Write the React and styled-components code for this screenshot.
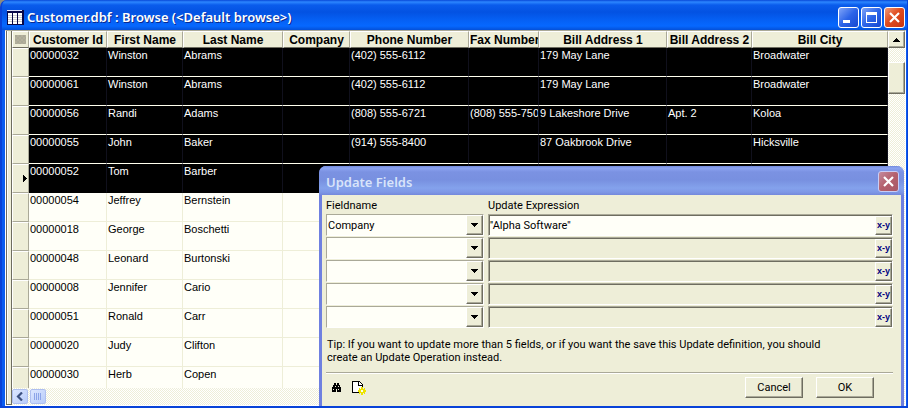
import React from "react";
import styled, { createGlobalStyle, css } from "styled-components";

const face = "#eeeed8";
const paper = "#fffff8";
const shade = "#aaa998";
const dark = "#6e6d60";
const ui = '"Liberation Sans", Arial, sans-serif';
const form = 'Roboto, "Liberation Sans", sans-serif';
const caption = '"Trebuchet MS", "Noto Sans", sans-serif';

const Global = createGlobalStyle`
  * { box-sizing: border-box; }
  body { margin: 0; background: #8c8b80; font-family: ${ui}; color: #000; }
  button, select, input { font-family: inherit; color: inherit; margin: 0; padding: 0; border: 0; border-radius: 0; }
`;

const hatch = css`
  background: repeating-conic-gradient(#ffffff 0 25%, ${face} 0 50%) 0 0 / 2px 2px;
`;

const raised = css`
  background: ${face};
  border: 1px solid;
  border-color: #ffffff ${dark} ${dark} #ffffff;
  box-shadow: inset -1px -1px 0 ${shade};
`;

const Window = styled.main`
  position: relative;
  display: flex;
  flex-direction: column;
  height: 100vh;
  overflow: hidden;
  border: solid #0842d8;
  border-width: 0 1px 2px 2px;
  border-radius: 7px 0 0 0;
  background: #0a5cf0;
`;

const TitleBar = styled.header`
  flex: none;
  display: flex;
  align-items: center;
  height: 30px;
  padding: 4px 2px 0 5px;
  background: linear-gradient(#0848d8 0, #2c86ff 2px, #0a5cec 5px, #0352e2 12px, #0560f4 20px, #0668ff 26px, #0450d8 30px);
`;

const Title = styled.h1`
  flex: 1;
  margin: 0 0 0 3px;
  color: #fff;
  font: 600 13px/20px ${caption};
  text-shadow: 1px 1px 0 #0a2a90;
  white-space: nowrap;
`;

const CaptionButtons = styled.div`
  display: flex;
  gap: 2px;
`;

const CaptionButton = styled.button`
  display: grid;
  place-items: center;
  width: 21px;
  height: 21px;
  && { border: 1px solid ${(p) => (p.$tone === "muted" ? "#c8cdf6" : "#ffffff")}; border-radius: 3px; }
  background: ${(p) => (p.$tone === "close"
    ? "linear-gradient(135deg, #f09a78, #e04c20 45%, #c83410)"
    : p.$tone === "muted"
      ? "linear-gradient(135deg, #c48a9c, #b4606c 50%, #a85868)"
      : "linear-gradient(135deg, #80a4f8, #2c64e8 50%, #1648d0)")};
`;

const Client = styled.div`
  flex: 1;
  min-height: 0;
  display: flex;
  margin: 0 1px 0 3px;
  border: solid #ffffff;
  border-width: 0 1px 1px 1px;
  border-top: 1px solid ${shade};
  background: ${face};
`;

const Gutter = styled.div`
  flex: none;
  width: 6px;
  border-left: 1px solid ${dark};
  border-right: 1px solid ${dark};
  border-bottom: 1px solid ${dark};
  background: ${face};
  box-shadow: inset 1px 0 0 #ffffff;
`;

const Sheet = styled.div`
  flex: 1;
  min-width: 0;
  display: flex;
  flex-direction: column;
`;

const Viewport = styled.div`
  flex: 1;
  min-height: 0;
  overflow: hidden;
  background: ${paper};
`;

const Grid = styled.table`
  width: 100%;
  table-layout: fixed;
  border-collapse: separate;
  border-spacing: 0;
  font-size: 11px;
  line-height: 13px;
`;

const Col = styled.col`
  width: ${(p) => (p.$w ? `${p.$w}px` : "auto")};
`;

const Head = styled.th`
  height: 17px;
  padding: 0;
  overflow: hidden;
  white-space: nowrap;
  font: bold 12px/14px ${ui};
  background: ${face};
  border: 1px solid;
  border-color: #ffffff ${shade} ${dark} #ffffff;
`;

const Corner = styled(Head)`
  padding: 0 2px;
`;

const Stipple = styled.div`
  height: 9px;
  background: repeating-conic-gradient(#b4b09c 0 25%, #aaa998 0 50%) 0 0 / 4px 4px;
`;

const Row = styled.tr`
  background: ${(p) => (p.$selected ? "#000000" : paper)};
  color: ${(p) => (p.$selected ? "#ffffff" : "#000000")};
  --line: ${(p) => (p.$selected ? "#10101c" : face)};
  --rule: ${(p) => (p.$last ? "#000000" : p.$selected ? "#ffffee" : face)};
`;

const Cell = styled.td`
  height: 29px;
  padding: 1px 0 0 1px;
  vertical-align: top;
  overflow: hidden;
  white-space: nowrap;
  border-right: 1px solid var(--line);
  border-bottom: 1px solid var(--rule);
`;

const Selector = styled.th`
  height: 29px;
  padding: 0 1px 0 0;
  background: ${face};
  color: #000;
  border: 1px solid;
  border-color: #ffffff ${shade} ${shade} #ffffff;
  text-align: right;
  vertical-align: middle;
  line-height: 0;
`;

const VScroll = styled.div`
  flex: none;
  display: flex;
  flex-direction: column;
  width: 17px;
  ${hatch}
`;

const ScrollArrow = styled.button`
  && { ${raised} }
  display: grid;
  place-items: center;
  height: 17px;
`;

const VThumb = styled.div`
  ${raised}
  height: 32px;
  margin-top: 14px;
`;

const HScroll = styled.div`
  flex: none;
  display: flex;
  gap: 2px;
  height: 17px;
  padding: 1px 0;
  ${hatch}
`;

const BlueButton = styled.button`
  display: grid;
  place-items: center;
  width: 16px;
  height: 15px;
  && { border: 1px solid #aebff0; border-radius: 2px; }
  background: linear-gradient(135deg, #dce6ff, #b8ccfa);
`;

const Dialog = styled.section`
  position: absolute;
  left: 317px;
  right: 3px;
  top: 166px;
  border: solid #6f80e0;
  border-width: 0 3px;
  border-radius: 7px 7px 0 0;
  background: ${face};
  font-family: ${form};
`;

const DialogBar = styled.header`
  display: flex;
  align-items: center;
  height: 29px;
  margin: 0 -3px;
  padding: 2px 5px 0 7px;
  border-radius: 7px 7px 0 0;
  background: linear-gradient(#7088dc 0, #8ca4f0 2px, #7b92e2 6px, #7890e0 14px, #84a2ec 22px, #7e98e6 26px, #7488dc 29px);
`;

const DialogTitle = styled.h2`
  flex: 1;
  margin: 0;
  color: #d8e4fa;
  font: 600 13px/20px ${caption};
`;

const Form = styled.form`
  padding: 4px 8px 8px 4px;
  font-size: 11px;
`;

const FieldGrid = styled.div`
  display: grid;
  grid-template-columns: 158px 1fr;
  column-gap: 4px;
  row-gap: 1px;
`;

const Label = styled.label`
  height: 14px;
  font-size: 11px;
  line-height: 14px;
`;

const Combo = styled.div`
  display: grid;
  height: 22px;
  background: ${paper};
  border: 1px solid;
  border-color: ${shade} #ffffff #ffffff ${shade};
`;

const Select = styled.select`
  grid-area: 1 / 1;
  appearance: none;
  width: 100%;
  && { padding-left: 1px; }
  background: transparent;
  font-size: 11px;
`;

const ComboArrow = styled.span`
  grid-area: 1 / 1;
  justify-self: end;
  display: grid;
  place-items: center;
  width: 17px;
  pointer-events: none;
  ${raised}
`;

const Expression = styled.div`
  display: flex;
  height: 22px;
  border: 1px solid;
  border-color: ${shade} #ffffff #ffffff ${shade};
  box-shadow: inset 1px 1px 0 ${dark};
  padding: 1px 0 0 1px;
`;

const ExpressionInput = styled.input`
  flex: 1;
  min-width: 0;
  font-size: 11px;
  background: ${(p) => (p.disabled ? "transparent" : paper)};
`;

const XyButton = styled.button`
  && { ${raised} color: #000080; padding-bottom: 2px; font: bold 9px/12px ${ui}; }
  flex: none;
  display: grid;
  place-items: center;
  width: 17px;
`;

const Tip = styled.p`
  margin: 10px 80px 8px 1px;
  font-size: 11px;
  line-height: 13px;
  white-space: nowrap;
`;

const Rule = styled.hr`
  margin: 0;
  border: 0;
  border-top: 1px solid ${shade};
  border-bottom: 1px solid #ffffff;
`;

const Footer = styled.div`
  display: flex;
  align-items: center;
  padding: 3px 19px 0 3px;
`;

const Tools = styled.div`
  flex: 1;
  display: flex;
  gap: 6px;
`;

const ToolButton = styled.button`
  display: grid;
  place-items: center;
  width: 16px;
  height: 16px;
  background: transparent;
`;

const Actions = styled.div`
  display: flex;
  gap: 13px;
`;

const PushButton = styled.button`
  && { ${raised} }
  width: 58px;
  height: 21px;
  font-size: 11px;
`;

const Cross = ({ size = 13 }) => (
  <svg width={size} height={size} viewBox="0 0 13 13" aria-hidden="true">
    <path d="M2 2 11 11M11 2 2 11" stroke="#fff" strokeWidth="2.2" />
  </svg>
);

const DownArrow = () => (
  <svg width="7" height="4" viewBox="0 0 7 4" shapeRendering="crispEdges" aria-hidden="true">
    <path d="M0 0h7v1H6v1H5v1H4v1H3V3H2V2H1V1H0z" />
  </svg>
);

const UpArrow = () => (
  <svg width="7" height="4" viewBox="0 0 7 4" shapeRendering="crispEdges" aria-hidden="true">
    <path d="M3 0h1v1h1v1h1v1h1v1H0V3h1V2h1V1h1z" />
  </svg>
);

const TableIcon = () => (
  <svg width="17" height="15" viewBox="0 0 17 15" shapeRendering="crispEdges" aria-hidden="true">
    <path fill="#080848" d="M0 0h17v15H0z" />
    <path fill="#fff" d="M1 3h4v11H1zM6 3h4v11H6zM11 3h4v11h-4z" />
    <path stroke="#d0d0d0" d="M1 5.5h14M1 7.5h14M1 9.5h14M1 11.5h14" />
    <path fill="#080848" d="M5 0h1v15H5zM10 0h1v15h-1z" />
    <path fill="#dfe6ff" d="M0 0h15v1H0z" />
  </svg>
);

const Binoculars = () => (
  <svg width="10" height="10" viewBox="0 0 10 10" shapeRendering="crispEdges" aria-hidden="true">
    <path d="M2 0h2v2h1V0h2v2h1v2h1v5H5V6H4v3H0V4h1V2h1z" />
    <path fill={face} d="M3 3h1v1H3zM6 3h1v1H6zM1 6h1v1H1zM6 6h1v1H6z" />
  </svg>
);

const NewPage = () => (
  <svg width="14" height="14" viewBox="0 0 14 14" shapeRendering="crispEdges" aria-hidden="true">
    <path fill="#fff" d="M1 1h6l3 3v7H1z" />
    <path d="M0 0h8v1h1v1h1v1h1v4h-1V5H6V1H1v10h6v1H0zM7 1v3h3V3H9V2H8V1z" />
    <path fill="#ece400" d="M9 6h2v2h1V7h1v2h1v2h-1v2h-1v-1h-1v2H9v-2H8v1H7v-2H6V9h1V7h1v1h1z" />
    <path fill="#fffff0" d="M9 9h2v2H9z" />
  </svg>
);

const columns = [
  ["Customer Id", 78], ["First Name", 76], ["Last Name", 100], ["Company", 67],
  ["Phone Number", 119], ["Fax Number", 70], ["Bill Address 1", 128], ["Bill Address 2", 85], ["Bill City", null],
];

const customers = [
  ["00000032", "Winston", "Abrams", "", "(402) 555-6112", "", "179 May Lane", "", "Broadwater"],
  ["00000061", "Winston", "Abrams", "", "(402) 555-6112", "", "179 May Lane", "", "Broadwater"],
  ["00000056", "Randi", "Adams", "", "(808) 555-6721", "(808) 555-7500", "9 Lakeshore Drive", "Apt. 2", "Koloa"],
  ["00000055", "John", "Baker", "", "(914) 555-8400", "", "87 Oakbrook Drive", "", "Hicksville"],
  ["00000052", "Tom", "Barber"],
  ["00000054", "Jeffrey", "Bernstein"],
  ["00000018", "George", "Boschetti"],
  ["00000048", "Leonard", "Burtonski"],
  ["00000008", "Jennifer", "Cario"],
  ["00000051", "Ronald", "Carr"],
  ["00000020", "Judy", "Clifton"],
  ["00000030", "Herb", "Copen"],
];

const updates = [
  { field: "Company", expression: "''Alpha Software''" },
  { field: "", expression: "" },
  { field: "", expression: "" },
  { field: "", expression: "" },
  { field: "", expression: "" },
];

const currentRow = 4;

function BrowseGrid() {
  return (
    <Grid>
      <colgroup>
        <Col $w={17} />
        {columns.map(([name, w]) => <Col key={name} $w={w} />)}
      </colgroup>
      <thead>
        <tr>
          <Corner aria-label="Row"><Stipple /></Corner>
          {columns.map(([name]) => <Head key={name} scope="col">{name}</Head>)}
        </tr>
      </thead>
      <tbody>
        {customers.map((row, i) => (
          <Row key={row[0]} $selected={i <= currentRow} $last={i === currentRow}>
            <Selector scope="row" aria-label={`Row ${row[0]}`}>
              {i === currentRow && (
                <svg width="4" height="7" viewBox="0 0 4 7" shapeRendering="crispEdges" aria-hidden="true">
                  <path d="M0 0h1v1h1v1h1v1h1v1H3v1H2v1H1v1H0z" />
                </svg>
              )}
            </Selector>
            {columns.map(([name], c) => <Cell key={name}>{row[c]}</Cell>)}
          </Row>
        ))}
      </tbody>
    </Grid>
  );
}

function UpdateFields() {
  return (
    <Dialog role="dialog" aria-labelledby="update-title">
      <DialogBar>
        <DialogTitle id="update-title">Update Fields</DialogTitle>
        <CaptionButton type="button" $tone="muted" aria-label="Close dialog"><Cross /></CaptionButton>
      </DialogBar>
      <Form onSubmit={(e) => e.preventDefault()}>
        <FieldGrid>
          <Label htmlFor="field-0">Fieldname</Label>
          <Label htmlFor="expression-0">Update Expression</Label>
          {updates.map((u, i) => (
            <React.Fragment key={i}>
              <Combo>
                <Select id={`field-${i}`} aria-label={i ? `Fieldname ${i + 1}` : undefined} defaultValue={u.field}>
                  <option value="" />
                  {columns.map(([name]) => <option key={name}>{name}</option>)}
                </Select>
                <ComboArrow><DownArrow /></ComboArrow>
              </Combo>
              <Expression>
                <ExpressionInput
                  id={`expression-${i}`}
                  aria-label={i ? `Update Expression ${i + 1}` : undefined}
                  defaultValue={u.expression}
                  disabled={!u.field}
                />
                <XyButton type="button" aria-label={`Build expression ${i + 1}`}>x-y</XyButton>
              </Expression>
            </React.Fragment>
          ))}
        </FieldGrid>
        <Tip>
          Tip: If you want to update more than 5 fields, or if you want the save this Update definition, you should
          <br />
          create an Update Operation instead.
        </Tip>
        <Rule />
        <Footer>
          <Tools>
            <ToolButton type="button" aria-label="Find"><Binoculars /></ToolButton>
            <ToolButton type="button" aria-label="New"><NewPage /></ToolButton>
          </Tools>
          <Actions>
            <PushButton type="button">Cancel</PushButton>
            <PushButton type="submit">OK</PushButton>
          </Actions>
        </Footer>
      </Form>
    </Dialog>
  );
}

export default function App() {
  return (
    <>
      <Global />
      <Window>
        <TitleBar>
          <TableIcon />
          <Title>{"Customer.dbf : Browse (<Default browse>)"}</Title>
          <CaptionButtons>
            <CaptionButton type="button" aria-label="Minimize">
              <svg width="13" height="13" viewBox="0 0 13 13" aria-hidden="true"><path fill="#fff" d="M1 9h7v3H1z" /></svg>
            </CaptionButton>
            <CaptionButton type="button" aria-label="Maximize">
              <svg width="13" height="13" viewBox="0 0 13 13" shapeRendering="crispEdges" aria-hidden="true"><path fill="#fff" fillRule="evenodd" d="M1 1h11v11H1zM2 4v7h9V4z" /></svg>
            </CaptionButton>
            <CaptionButton type="button" $tone="close" aria-label="Close"><Cross /></CaptionButton>
          </CaptionButtons>
        </TitleBar>
        <Client>
          <Gutter />
          <Sheet>
            <Viewport><BrowseGrid /></Viewport>
            <HScroll>
              <BlueButton type="button" aria-label="Scroll left">
                <svg width="8" height="9" viewBox="0 0 8 9" aria-hidden="true"><path d="M6 0.5 2 4.5l4 4" fill="none" stroke="#3c5080" strokeWidth="2.2" /></svg>
              </BlueButton>
              <BlueButton type="button" aria-label="Horizontal position">
                <svg width="8" height="7" viewBox="0 0 8 7" shapeRendering="crispEdges" aria-hidden="true"><path d="M.5 0v7M2.5 0v7M4.5 0v7M6.5 0v7" stroke="#8ca4e8" /></svg>
              </BlueButton>
            </HScroll>
          </Sheet>
          <VScroll>
            <ScrollArrow type="button" aria-label="Scroll up"><UpArrow /></ScrollArrow>
            <VThumb />
          </VScroll>
        </Client>
        <UpdateFields />
      </Window>
    </>
  );
}
